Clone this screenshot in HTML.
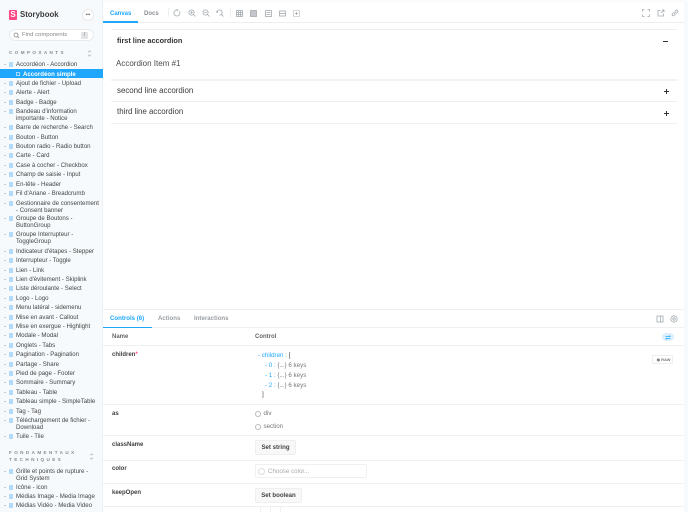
<!DOCTYPE html>
<html><head><meta charset="utf-8"><style>
html,body{margin:0;padding:0;width:688px;height:512px;overflow:hidden;background:#fff;font-family:"Liberation Sans",sans-serif;color:#333}
#w{position:absolute;left:0;top:0;width:688px;height:512px;filter:blur(.3px);overflow:hidden;background:#fff}
.a{position:absolute}
svg.a{fill:none;stroke:#a4abb0;stroke-width:.8}
.t{position:absolute;white-space:nowrap;line-height:8px;font-size:6.2px;color:#444}
.s{position:absolute;white-space:nowrap;line-height:7px;font-size:6.1px;color:#444;left:16px;margin-top:.7px}
.d{position:absolute;left:4px;width:2px;height:1px;background:#c4c8cc}
.b{position:absolute;left:8.5px;width:4.5px;height:4.5px;background:#b3dbf7}
.l{position:absolute;height:1px;background:#eef0f2}
.btn{position:absolute;left:255px;height:15px;border:1px solid #efefef;border-radius:2px;background:#f8f8f8;font-size:6.1px;font-weight:bold;line-height:13px;text-align:center;color:#444;box-sizing:border-box}
.h{position:absolute;font-size:8px;line-height:10px;white-space:nowrap;color:#3a3a3a}
.n{font-weight:bold;color:#3f3f3f;font-size:6px}
.g{position:absolute;left:9px;font-size:4.6px;font-weight:bold;letter-spacing:2.4px;color:#8a8a8a;white-space:nowrap;line-height:8px}
</style></head><body><div id="w">
<div class="a" style="left:0;top:0;width:103px;height:512px;background:#f7fafc"></div>
<div class="a" style="left:684px;top:0;width:4px;height:512px;background:#f7fafc"></div>
<div class="a" style="left:103px;top:0;width:585px;height:3px;background:#fafbfc"></div>
<div class="a" style="left:102px;top:0;width:1px;height:512px;background:#eef0f2"></div>
<div class="a" style="left:9px;top:10px;width:8px;height:10px;background:#ff4785;border-radius:1px;color:#fff;font-size:8px;font-weight:bold;line-height:10px;text-align:center">S</div>
<div class="a" style="left:20px;top:9px;font-size:7.8px;font-weight:bold;line-height:12px;color:#3a3a3a">Storybook</div>
<div class="a" style="left:82px;top:9px;width:12px;height:12px;border-radius:50%;background:#fff;border:1px solid #e8eaec;box-sizing:border-box;font-size:4.5px;line-height:9px;text-align:center;font-weight:bold;color:#555">•••</div>
<div class="a" style="left:9px;top:29px;width:85px;height:12px;border-radius:6px;background:#fff;border:1px solid #e8eaec;box-sizing:border-box"></div>
<svg class="a" style="left:13px;top:32px;stroke:#888" width="7" height="7" viewBox="0 0 7 7"><circle cx="3" cy="3" r="2"/><path d="M4.5 4.5L6 6"/></svg>
<div class="t" style="left:22px;top:31px;color:#888;font-size:5.9px">Find components</div>
<div class="a" style="left:81px;top:32px;width:7px;height:7px;background:#e2e4e6;color:#777;font-size:5px;line-height:7px;text-align:center;border-radius:1px">/</div>
<div class="g" style="top:49px">COMPOSANTS</div>
<svg class="a" style="left:87px;top:50px;stroke:#b5b9bd" width="5" height="7" viewBox="0 0 5 7"><path d="M1 2.2L2.5 .8L4 2.2M1 4.8L2.5 6.2L4 4.8"/></svg>

<div class="a" style="left:0;top:69px;width:103px;height:9px;background:#1ea7fd"></div>
<div class="a" style="left:16px;top:71.5px;width:4px;height:4px;border:1px solid #a8dcfe;box-sizing:border-box"></div>
<div class="s" style="left:23px;top:70px;color:#fff;font-weight:bold">Accordéon simple</div>

<div class="d" style="top:64px"></div><div class="b" style="top:62px"></div><div class="s" style="top:60px">Accordéon - Accordion</div>
<div class="d" style="top:83px"></div><div class="b" style="top:81px"></div><div class="s" style="top:79px">Ajout de fichier - Upload</div>
<div class="d" style="top:92px"></div><div class="b" style="top:90px"></div><div class="s" style="top:88px">Alerte - Alert</div>
<div class="d" style="top:102px"></div><div class="b" style="top:100px"></div><div class="s" style="top:98px">Badge - Badge</div>
<div class="d" style="top:111px"></div><div class="b" style="top:109px"></div><div class="s" style="top:107px">Bandeau d'information</div><div class="s" style="top:114px">importante - Notice</div>
<div class="d" style="top:127px"></div><div class="b" style="top:125px"></div><div class="s" style="top:123px">Barre de recherche - Search</div>
<div class="d" style="top:137px"></div><div class="b" style="top:135px"></div><div class="s" style="top:133px">Bouton - Button</div>
<div class="d" style="top:146px"></div><div class="b" style="top:144px"></div><div class="s" style="top:142px">Bouton radio - Radio button</div>
<div class="d" style="top:155px"></div><div class="b" style="top:153px"></div><div class="s" style="top:151px">Carte - Card</div>
<div class="d" style="top:165px"></div><div class="b" style="top:163px"></div><div class="s" style="top:161px">Case à cocher - Checkbox</div>
<div class="d" style="top:174px"></div><div class="b" style="top:172px"></div><div class="s" style="top:170px">Champ de saisie - Input</div>
<div class="d" style="top:184px"></div><div class="b" style="top:182px"></div><div class="s" style="top:180px">En-tête - Header</div>
<div class="d" style="top:193px"></div><div class="b" style="top:191px"></div><div class="s" style="top:189px">Fil d'Ariane - Breadcrumb</div>
<div class="d" style="top:203px"></div><div class="b" style="top:201px"></div><div class="s" style="top:199px">Gestionnaire de consentement</div><div class="s" style="top:206px">- Consent banner</div>
<div class="d" style="top:218px"></div><div class="b" style="top:216px"></div><div class="s" style="top:214px">Groupe de Boutons -</div><div class="s" style="top:221px">ButtonGroup</div>
<div class="d" style="top:234px"></div><div class="b" style="top:232px"></div><div class="s" style="top:230px">Groupe Interrupteur -</div><div class="s" style="top:237px">ToggleGroup</div>
<div class="d" style="top:251px"></div><div class="b" style="top:249px"></div><div class="s" style="top:247px">Indicateur d'étapes - Stepper</div>
<div class="d" style="top:260px"></div><div class="b" style="top:258px"></div><div class="s" style="top:256px">Interrupteur - Toggle</div>
<div class="d" style="top:270px"></div><div class="b" style="top:268px"></div><div class="s" style="top:266px">Lien - Link</div>
<div class="d" style="top:279px"></div><div class="b" style="top:277px"></div><div class="s" style="top:275px">Lien d'évitement - Skiplink</div>
<div class="d" style="top:288px"></div><div class="b" style="top:286px"></div><div class="s" style="top:284px">Liste déroulante - Select</div>
<div class="d" style="top:298px"></div><div class="b" style="top:296px"></div><div class="s" style="top:294px">Logo - Logo</div>
<div class="d" style="top:307px"></div><div class="b" style="top:305px"></div><div class="s" style="top:303px">Menu latéral - sidemenu</div>
<div class="d" style="top:317px"></div><div class="b" style="top:315px"></div><div class="s" style="top:313px">Mise en avant - Callout</div>
<div class="d" style="top:326px"></div><div class="b" style="top:324px"></div><div class="s" style="top:322px">Mise en exergue - Highlight</div>
<div class="d" style="top:335px"></div><div class="b" style="top:333px"></div><div class="s" style="top:331px">Modale - Modal</div>
<div class="d" style="top:345px"></div><div class="b" style="top:343px"></div><div class="s" style="top:341px">Onglets - Tabs</div>
<div class="d" style="top:354px"></div><div class="b" style="top:352px"></div><div class="s" style="top:350px">Pagination - Pagination</div>
<div class="d" style="top:364px"></div><div class="b" style="top:362px"></div><div class="s" style="top:360px">Partage - Share</div>
<div class="d" style="top:373px"></div><div class="b" style="top:371px"></div><div class="s" style="top:369px">Pied de page - Footer</div>
<div class="d" style="top:382px"></div><div class="b" style="top:380px"></div><div class="s" style="top:378px">Sommaire - Summary</div>
<div class="d" style="top:392px"></div><div class="b" style="top:390px"></div><div class="s" style="top:388px">Tableau - Table</div>
<div class="d" style="top:401px"></div><div class="b" style="top:399px"></div><div class="s" style="top:397px">Tableau simple - SimpleTable</div>
<div class="d" style="top:411px"></div><div class="b" style="top:409px"></div><div class="s" style="top:407px">Tag - Tag</div>
<div class="d" style="top:420px"></div><div class="b" style="top:418px"></div><div class="s" style="top:416px">Téléchargement de fichier -</div><div class="s" style="top:423px">Download</div>
<div class="d" style="top:436px"></div><div class="b" style="top:434px"></div><div class="s" style="top:432px">Tuile - Tile</div>
<div class="g" style="top:449px">FONDAMENTAUX</div>
<div class="g" style="top:456px">TECHNIQUES</div>
<svg class="a" style="left:89px;top:453px;stroke:#b5b9bd" width="5" height="7" viewBox="0 0 5 7"><path d="M1 2.2L2.5 .8L4 2.2M1 4.8L2.5 6.2L4 4.8"/></svg>
<div class="d" style="top:471px"></div><div class="b" style="top:469px"></div><div class="s" style="top:467px">Grille et points de rupture -</div><div class="s" style="top:474px">Grid System</div>
<div class="d" style="top:487px"></div><div class="b" style="top:485px"></div><div class="s" style="top:483px">Icône - icon</div>
<div class="d" style="top:496px"></div><div class="b" style="top:494px"></div><div class="s" style="top:492px">Médias Image - Media Image</div>
<div class="d" style="top:505px"></div><div class="b" style="top:503px"></div><div class="s" style="top:501px">Médias Vidéo - Media Video</div>

<!-- toolbar -->
<div class="l" style="left:103px;top:22px;width:581px;background:#eceef0"></div>
<div class="a" style="left:103px;top:21px;width:35px;height:1.5px;background:#1ea7fd"></div>
<div class="t" style="left:110px;top:10px;font-weight:bold;color:#1ea7fd;font-size:6px">Canvas</div>
<div class="t" style="left:144px;top:10px;font-weight:bold;color:#8a8f94;font-size:6px">Docs</div>
<div class="a" style="left:168px;top:8px;width:1px;height:9px;background:#eceef0"></div>
<svg class="a" style="left:173px;top:9px" width="8" height="8" viewBox="0 0 8 8"><path d="M6.5 2.5A3 3 0 1 1 4 1M4 0L5 1L4 2"/></svg>
<svg class="a" style="left:188px;top:9px" width="8" height="8" viewBox="0 0 8 8"><circle cx="3.5" cy="3.5" r="2.6"/><path d="M5.5 5.5L7.5 7.5M2.3 3.5H4.7M3.5 2.3V4.7"/></svg>
<svg class="a" style="left:202px;top:9px" width="8" height="8" viewBox="0 0 8 8"><circle cx="3.5" cy="3.5" r="2.6"/><path d="M5.5 5.5L7.5 7.5M2.3 3.5H4.7"/></svg>
<svg class="a" style="left:216px;top:9px" width="8" height="8" viewBox="0 0 8 8"><path d="M1 3.5A2.6 2.6 0 1 1 3.5 6.1M5.5 5.5L7.5 7.5M.2 2.5L1 3.6L2 2.8"/></svg>
<div class="a" style="left:230px;top:8px;width:1px;height:9px;background:#eceef0"></div>
<svg class="a" style="left:236px;top:10px" width="7" height="7" viewBox="0 0 7 7"><rect x=".5" y=".5" width="6" height="6"/><path d="M.5 2.5H6.500M.5 4.500H6.500M2.500 .5V6.500M4.500 .5V6.500"/></svg>
<svg class="a" style="left:250px;top:10px" width="7" height="7" viewBox="0 0 7 7"><rect x=".5" y=".5" width="6" height="6" fill="#c4c8cc"/></svg>
<svg class="a" style="left:265px;top:10px" width="7" height="7" viewBox="0 0 7 7"><rect x=".5" y=".5" width="6" height="6"/><path d="M1.500 2.500H5.500M1.500 4.500H5.500"/></svg>
<svg class="a" style="left:279px;top:10px" width="7" height="7" viewBox="0 0 7 7"><rect x=".5" y="1" width="6" height="5"/><path d="M.5 3.500H6.500"/></svg>
<svg class="a" style="left:293px;top:10px" width="7" height="7" viewBox="0 0 7 7"><rect x=".5" y=".5" width="6" height="6" stroke-dasharray="1.200 .8"/><path d="M3.500 2V5M2 3.500H5"/></svg>
<svg class="a" style="left:642px;top:9px" width="8" height="8" viewBox="0 0 8 8"><path d="M.5 2.500V.5H2.500M5.500 .5H7.500V2.500M7.500 5.500V7.500H5.500M2.500 7.500H.5V5.500"/></svg>
<svg class="a" style="left:657px;top:9px" width="8" height="8" viewBox="0 0 8 8"><path d="M6.500 4.500V7H1V1.500H3.500M4 4L7 1M5 1H7V3"/></svg>
<svg class="a" style="left:671px;top:9px" width="8" height="8" viewBox="0 0 8 8"><path d="M3.200 4.800L4.800 3.200M2.800 3.500L1.500 4.800A1.200 1.200 0 0 0 3.200 6.500L4.500 5.200M3.500 2.800L4.800 1.500A1.200 1.200 0 0 1 6.500 3.200L5.200 4.500"/></svg>

<!-- preview -->
<div class="l" style="left:111px;top:29px;width:566px"></div>
<div class="h" style="left:117px;top:35.5px;font-weight:bold;font-size:7.3px;color:#333">first line accordion</div>
<div class="a" style="left:663px;top:41px;width:5px;height:1px;background:#333"></div>
<div class="a" style="left:116px;top:58px;font-size:8px;line-height:11px;color:#4a4a4a;white-space:nowrap">Accordion Item #1</div>
<div class="l" style="left:111px;top:79px;width:566px;height:2px;background:#f1f2f3"></div>
<div class="h" style="left:117px;top:86px;font-size:7.9px">second line accordion</div>
<div class="a" style="left:663.500px;top:91px;width:5px;height:1px;background:#333"></div><div class="a" style="left:665.500px;top:89px;width:1px;height:5px;background:#333"></div>
<div class="l" style="left:111px;top:101px;width:566px"></div>
<div class="h" style="left:117px;top:107px;font-size:7.900px">third line accordion</div>
<div class="a" style="left:663.500px;top:113px;width:5px;height:1px;background:#333"></div><div class="a" style="left:665.500px;top:111px;width:1px;height:5px;background:#333"></div>
<div class="l" style="left:111px;top:122.500px;width:566px"></div>

<!-- addons -->
<div class="l" style="left:103px;top:309px;width:581px"></div>
<div class="l" style="left:103px;top:327px;width:581px"></div>
<div class="a" style="left:103px;top:326.500px;width:49px;height:1.500px;background:#1ea7fd"></div>
<div class="t" style="left:110px;top:315px;font-weight:bold;color:#1ea7fd;font-size:6.100px">Controls (6)</div>
<div class="t" style="left:158px;top:315px;font-weight:bold;color:#9a9ea2;font-size:6.100px">Actions</div>
<div class="t" style="left:194px;top:315px;font-weight:bold;color:#9a9ea2;font-size:6.100px">Interactions</div>
<svg class="a" style="left:656px;top:315px" width="8" height="8" viewBox="0 0 8 8"><rect x="1" y="1" width="6" height="6"/><path d="M4.500 1V7"/></svg>
<svg class="a" style="left:670px;top:315px" width="8" height="8" viewBox="0 0 8 8"><circle cx="4" cy="4" r="3.200"/><circle cx="4" cy="4" r="1.200"/></svg>

<div class="t" style="left:112px;top:333px;font-weight:bold;color:#666;font-size:6px">Name</div>
<div class="t" style="left:255px;top:333px;font-weight:bold;color:#666;font-size:6px">Control</div>
<div class="a" style="left:662px;top:333px;width:12px;height:8px;background:#dceffb;border-radius:4px"></div>
<svg class="a" style="left:665px;top:334.500px;stroke:#1ea7fd" width="6" height="5" viewBox="0 0 6 5"><path d="M.5 1.500H5L4 .5M5.500 3.500H1L2 4.500"/></svg>
<div class="l" style="left:103px;top:345px;width:581px"></div>

<div class="t n" style="left:112px;top:351px">children<span style="color:#ff4785">*</span></div>
<div class="t" style="left:258px;top:352px;color:#1ea7fd">- children : <span style="color:#333">[</span></div>
<div class="t" style="left:265px;top:362px;color:#1ea7fd">- 0 : <span style="color:#777">{...} 6 keys</span></div>
<div class="t" style="left:265px;top:372px;color:#1ea7fd">- 1 : <span style="color:#777">{...} 6 keys</span></div>
<div class="t" style="left:265px;top:382px;color:#1ea7fd">- 2 : <span style="color:#777">{...} 6 keys</span></div>
<div class="t" style="left:262px;top:391px;color:#444">]</div>
<div class="a" style="left:652px;top:355px;width:21px;height:9px;border:1px solid #eee;border-radius:1px;box-sizing:border-box;font-size:4px;line-height:7px;text-align:right;padding-right:1.500px;color:#777;white-space:nowrap;font-weight:bold">◉ RAW</div>
<div class="l" style="left:103px;top:404px;width:581px"></div>

<div class="t n" style="left:112px;top:410px">as</div>
<div class="a" style="left:255px;top:411px;width:6px;height:6px;border:.8px solid #bbb;border-radius:50%;box-sizing:border-box"></div>
<div class="t" style="left:263.500px;top:410px;color:#777">div</div>
<div class="a" style="left:255px;top:423.500px;width:6px;height:6px;border:.8px solid #bbb;border-radius:50%;box-sizing:border-box"></div>
<div class="t" style="left:263.500px;top:422.500px;color:#777">section</div>
<div class="l" style="left:103px;top:435px;width:581px"></div>

<div class="t n" style="left:112px;top:441px">className</div>
<div class="btn" style="top:440px;width:41px">Set string</div>
<div class="l" style="left:103px;top:459.500px;width:581px"></div>

<div class="t n" style="left:112px;top:465px">color</div>
<div class="a" style="left:255px;top:464px;width:112px;height:14px;border:1px solid #f0f0f0;border-radius:2px;box-sizing:border-box"></div>
<div class="a" style="left:258px;top:467.500px;width:7px;height:7px;border:1px solid #ddd;border-radius:50%;box-sizing:border-box"></div>
<div class="t" style="left:268px;top:467.500px;color:#aaa">Choose color...</div>
<div class="l" style="left:103px;top:483px;width:581px"></div>

<div class="t n" style="left:112px;top:489px">keepOpen</div>
<div class="btn" style="top:487.500px;width:47px">Set boolean</div>
<div class="l" style="left:103px;top:506px;width:581px"></div>
<div class="a" style="left:260px;top:507px;width:1px;height:5px;background:#f0f0f0"></div>
<div class="a" style="left:270px;top:507px;width:1px;height:5px;background:#f0f0f0"></div>
<div class="a" style="left:280px;top:507px;width:1px;height:5px;background:#f0f0f0"></div>
</div></body></html>
